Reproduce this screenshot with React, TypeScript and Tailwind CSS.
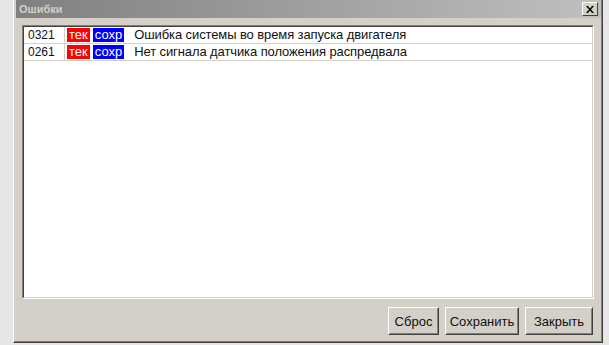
const errors = [
  { code: '0321', text: 'Ошибка системы во время запуска двигателя' },
  { code: '0261', text: 'Нет сигнала датчика положения распредвала' }
]

const Button = ({ label, width }: { label: string; width: string }) => (
  <button
    className={`h-[28px] ${width} bg-[#d4d0c8] border border-t-white border-l-white border-r-[#404040] border-b-[#404040] text-[13px] text-[#111] leading-none`}>
    <span className="block h-full w-full border border-transparent border-r-[#808080] border-b-[#808080] pt-[6px]">
      {label}
    </span>
  </button>
)

const App = () => {
  return (
    <div
      className="w-[609px] h-[345px] bg-[#e6e6e6] overflow-hidden"
      style={{ fontFamily: '"Liberation Sans", Arial, sans-serif' }}>
      <div className="ml-[13px] w-[590px] h-[343px] bg-[#d4d0c8] border-l border-l-white border-r border-r-[#404040] border-b border-b-[#404040] flex flex-col">
        <div className="flex-1 flex flex-col border-r border-r-[#808080] border-b border-b-[#808080] pl-[2px]">
          {/* title bar */}
          <div className="h-[18px] flex items-center justify-between bg-gradient-to-r from-[#808080] to-[#c0c0c0] pl-[3px] pr-[3px]">
            <span className="text-[11px] font-bold text-[#d4d0c8]">Ошибки</span>
            <span className="w-[16px] h-[14px] bg-[#d4d0c8] border border-t-white border-l-white border-r-[#404040] border-b-[#404040] flex items-center justify-center">
              <svg width="8" height="7" viewBox="0 0 8 7">
                <path d="M0 0h2l2 2.5 2-2.5h2l-3 3.5 3 3.5h-2l-2-2.5-2 2.5h-2l3-3.5z" fill="#000" />
              </svg>
            </span>
          </div>

          {/* list */}
          <div className="ml-[6px] mt-[7px] w-[572px] h-[274px] border-t border-l border-t-[#808080] border-l-[#808080] border-b border-r border-b-white border-r-white">
            <div className="h-full border-t border-l border-t-[#404040] border-l-[#404040] border-b border-r border-b-[#d4d0c8] border-r-[#d4d0c8] bg-white">
              {errors.map((item) => (
                <div
                  key={item.code}
                  className="h-[17px] flex items-center border-b border-b-[#d4d0c8] text-[13px] text-[#111]">
                  <div className="w-[41px] h-full pl-[4px] flex items-center border-r border-r-[#d4d0c8] text-[12px]">
                    {item.code}
                  </div>
                  <span className="ml-[2px] h-[14px] px-[2px] bg-[#ff0000] text-white flex items-center">тек</span>
                  <span className="ml-[3px] h-[14px] px-[2px] bg-[#0000ff] text-white flex items-center">сохр</span>
                  <span className="ml-[10px] tracking-[-0.1px]">{item.text}</span>
                </div>
              ))}
            </div>
          </div>

          {/* buttons */}
          <div className="flex justify-end gap-[6px] mt-[8px] pr-[8px]">
            <Button label="Сброс" width="w-[51px]" />
            <Button label="Сохранить" width="w-[74px]" />
            <Button label="Закрыть" width="w-[68px]" />
          </div>
        </div>
      </div>
    </div>
  )
}

export default App
